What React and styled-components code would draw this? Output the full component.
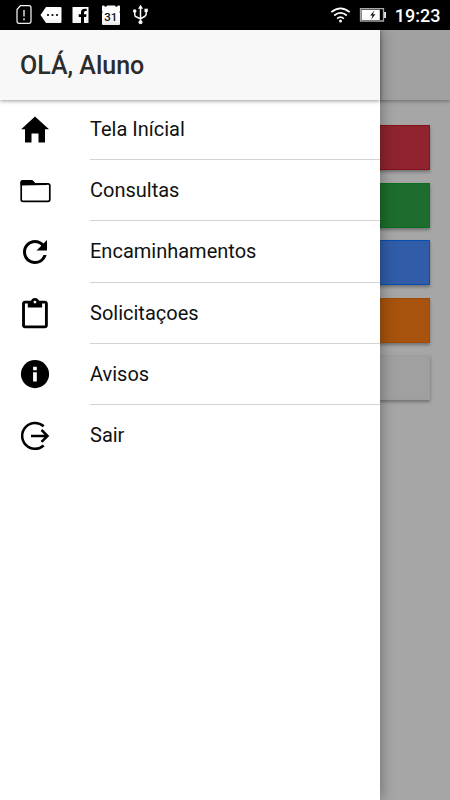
import React from 'react';
import styled, { createGlobalStyle } from 'styled-components';

const GlobalStyle = createGlobalStyle`
  * { box-sizing: border-box; }
  body { margin: 0; background: #a6a6a6; font-family: Roboto, sans-serif; }
`;

const Screen = styled.div`
  width: 450px;
  height: 800px;
  display: flex;
  flex-direction: column;
  overflow: hidden;
`;

const StatusBar = styled.header`
  height: 30px;
  flex: none;
  display: flex;
  align-items: center;
  justify-content: space-between;
  background: #000;
`;

const Clock = styled.span`
  color: #fff;
  font-size: 18px;
  line-height: 30px;
  font-weight: 500;
  padding: 1px 9.5px 0 0;
`;

const StatusGroup = styled.div`
  display: flex;
  height: 30px;
`;

const Stage = styled.main`
  position: relative;
  flex: 1;
  background: #a6a6a6;
`;

const PageBar = styled.div`
  height: 70px;
  background: #a1a1a1;
  box-shadow: 0 1px 4px rgba(0, 0, 0, 0.4);
`;

const Actions = styled.div`
  display: flex;
  flex-direction: column;
  gap: 12.5px;
  padding: 25px 20px;
`;

const ActionButton = styled.div`
  height: 45px;
  background: ${(p) => p.$fill};
  border: 1px solid ${(p) => p.$edge};
  box-shadow: 0 2px 3px rgba(0, 0, 0, 0.32);
`;

const Drawer = styled.nav`
  position: absolute;
  top: 0;
  bottom: 0;
  left: 0;
  width: 380px;
  background: #fff;
  box-shadow: 0 0 14px rgba(0, 0, 0, 0.38);
`;

const DrawerHeader = styled.div`
  height: 70px;
  display: flex;
  align-items: center;
  padding: 2px 0 0 20px;
  background: #f8f8f8;
  box-shadow: 0 1px 4px rgba(0, 0, 0, 0.4);
`;

const Title = styled.h1`
  margin: 0;
  color: #2c2c2c;
  font-size: 25px;
  line-height: 30px;
  font-weight: 500;
`;

const Menu = styled.ul`
  list-style: none;
  margin: -1.4px 0 0;
  padding: 0;
`;

const MenuItem = styled.li`
  display: flex;
  height: 61.3px;
  padding-left: 20px;
`;

const MenuIcon = styled.svg`
  flex: none;
  width: 31px;
  height: 30px;
  margin: 16.6px 39px 0 0;
  overflow: visible;
`;

const Label = styled.div`
  flex: 1;
  font-size: 20px;
  line-height: 60px;
  color: #111;
  border-bottom: ${(p) => (p.$last ? '0' : '1px solid #d4d4d4')};
`;

const LeftStatusIcons = () => (
  <svg width="160" height="30" viewBox="0 0 160 30">
    <path d="M20.5 5.7H29q2 0 2 2v13.6q0 2-2 2H19q-2 0-2-2V9.5z" fill="none" stroke="#fff" strokeWidth="1.2" />
    <path d="M24 10v6.5M24 18.3v2" stroke="#ddd" strokeWidth="1.5" />
    <path d="M46 7h14.5q1 0 1 1v14q0 1-1 1H46l-5.500-8z" fill="#fff" />
    <g fill="#000"><circle cx="48" cy="15" r="1.1" /><circle cx="52.5" cy="15" r="1.1" /><circle cx="57" cy="15" r="1.1" /></g>
    <path d="M72.500 7h16v16h-4.500v-6h2.100l.4-2.800h-2.500v-1.600q0-1.500 1.500-1.500h1.200V8.700h-2.300q-3.400 0-3.400 3.500v2h-2.300V17h2.300v6h-8.500z" fill="#fff" />
    <path d="M103 5.500h1.300a1.300 1.300 0 0 0 2.600 0h8.200a1.300 1.300 0 0 0 2.600 0H119q1 0 1 1V11l-.6 1 .6 1v11q0 1-1 1h-16q-1 0-1-1V13l.6-1-.6-1V6.500q0-1 1-1z" fill="#fff" />
    <text x="110.700" y="20.600" textAnchor="middle" fontSize="11.500" fontWeight="500" fontFamily="Roboto, sans-serif" fill="#111">31</text>
    <g fill="none" stroke="#fff" strokeWidth="1.500">
      <path d="M140.500 22V7M134.700 12v2.500q0 2 2 2.500l3.800 2 4-2.500q1.700-1 1.700-2.500V11" />
    </g>
    <g fill="#fff"><path d="m140.500 4.700 2.500 4h-5z" /><circle cx="140.500" cy="22.300" r="2" /><circle cx="134.700" cy="11" r="1.800" /><path d="M144.500 8.700h3.300V12h-3.300z" /></g>
  </svg>
);

const RightStatusIcons = () => (
  <svg width="85" height="30" viewBox="310 0 85 30">
    <g fill="none" stroke="#fff" strokeWidth="1.700">
      <path d="M331.300 12.200q9.200-7.800 18.400 0M334.200 15.500q6.300-5.400 12.600 0M337.100 18.600q3.400-3 6.800 0" />
    </g>
    <circle cx="340.500" cy="21" r="1.500" fill="#fff" />
    <path d="M360.500 8.700h23V21h-23z" fill="none" stroke="#aaa" strokeWidth="1.300" />
    <path d="M361.500 9.700h18.300V20h-18.300zM384.200 12h1.700v6h-1.700z" fill="#fff" />
    <path d="m374.500 10.200-4.300 5.300h2.400l-1.400 4 4.200-5.200h-2.600z" fill="#111" />
  </svg>
);

const HomeIcon = () => (
  <path d="M15 1.500 29 14.200h-4v13.300h-6.500v-9h-7v9H5V14.200H1.200z" />
);

const FolderIcon = () => (
  <>
    <path d="M1.200 8V5.500q0-1.700 1.800-1.700h8q1 0 1.700.8l2 2.200H28q1.800 0 1.800 1.800V22.500q0 1.800-1.800 1.800H3q-1.800 0-1.800-1.800z" fill="none" stroke="#000" strokeWidth="1.700" />
    <path d="M.5 8.600V5.300Q.5 3.100 3 3.100h8q1.200 0 2 .8l2 2.100h12v2.100z" />
  </>
);

const RefreshIcon = () => (
  <path transform="translate(-3 -4) scale(1.500)" d="M17.650 6.350A7.960 7.960 0 0 0 12 4c-4.420 0-7.990 3.580-7.990 8s3.570 8 7.990 8c3.730 0 6.840-2.550 7.730-6h-2.080A5.990 5.990 0 0 1 12 18c-3.310 0-6-2.690-6-6s2.690-6 6-6c1.660 0 3.140.69 4.220 1.780L13 11h7V4z" />
);

const ClipboardIcon = () => (
  <path transform="translate(-2.200 -1) scale(1.430 1.370)" d="M19 2h-4.180C14.400.84 13.300 0 12 0c-1.300 0-2.400.84-2.820 2H5c-1.100 0-2 .9-2 2v16c0 1.100.9 2 2 2h14c1.100 0 2-.9 2-2V4c0-1.100-.9-2-2-2zm-7 0c.55 0 1 .45 1 1s-.45 1-1 1-1-.45-1-1 .45-1 1-1zm7 18H5V4h2v3h10V4h2z" />
);

const InfoIcon = () => (
  <>
    <circle cx="15" cy="14.100" r="14.100" />
    <path d="M13.100 6.700h3.700v3.600h-3.700zM13.100 12.200h3.700v9.200h-3.700z" fill="#fff" />
  </>
);

const ExitIcon = () => (
  <g fill="none" stroke="#000" strokeWidth="2.500">
    <path d="M23.700 4.300A12.900 12.900 0 1 0 23.700 23.500" />
    <path d="M11 13.900h17M21.500 8l6 5.900-6 5.900" />
  </g>
);

const items = [
  { label: 'Tela Inícial', Icon: HomeIcon },
  { label: 'Consultas', Icon: FolderIcon },
  { label: 'Encaminhamentos', Icon: RefreshIcon },
  { label: 'Solicitaçoes', Icon: ClipboardIcon },
  { label: 'Avisos', Icon: InfoIcon },
  { label: 'Sair', Icon: ExitIcon },
];

const actions = [
  ['#8f242e', '#85121d'],
  ['#1d6d2e', '#0c6c20'],
  ['#305ca8', '#0750b0'],
  ['#a7530d', '#a04c08'],
  ['#a0a0a0', '#9d9d9d'],
];

export default function App() {
  return (
    <Screen>
      <GlobalStyle />
      <StatusBar>
        <LeftStatusIcons />
        <StatusGroup>
          <RightStatusIcons />
          <Clock>19:23</Clock>
        </StatusGroup>
      </StatusBar>
      <Stage>
        <PageBar />
        <Actions>
          {actions.map(([fill, edge]) => (
            <ActionButton key={fill} $fill={fill} $edge={edge} />
          ))}
        </Actions>
        <Drawer>
          <DrawerHeader>
            <Title>OLÁ, Aluno</Title>
          </DrawerHeader>
          <Menu>
            {items.map(({ label, Icon }, i) => (
              <MenuItem key={label}>
                <MenuIcon viewBox="0 0 31 30"><Icon /></MenuIcon>
                <Label $last={i === items.length - 1}>{label}</Label>
              </MenuItem>
            ))}
          </Menu>
        </Drawer>
      </Stage>
    </Screen>
  );
}
